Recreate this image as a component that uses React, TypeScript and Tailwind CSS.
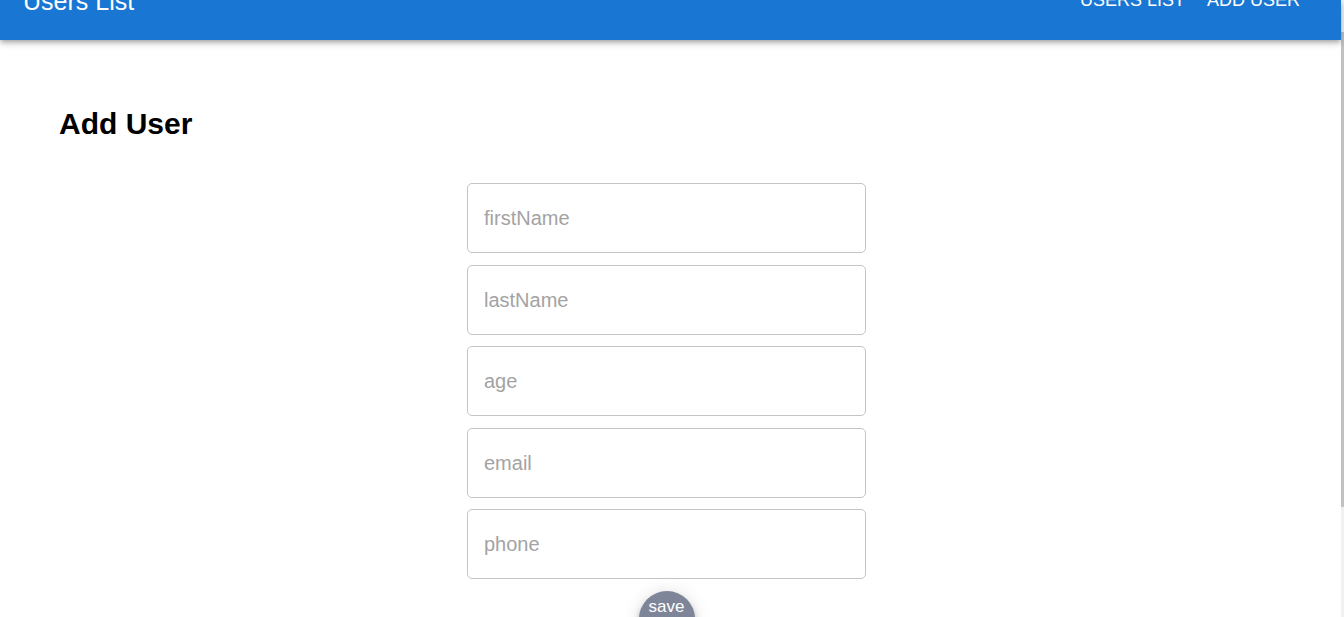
import React from "react";

const fields = ["firstName", "lastName", "age", "email", "phone"];

export default function App() {
  return (
    <div
      className="flex h-[617px] w-[1344px] overflow-hidden bg-white"
      style={{ fontFamily: '"Liberation Sans", Arial, sans-serif' }}
    >
      <div className="flex flex-1 flex-col">
        <header className="relative z-10 flex h-[40px] shrink-0 items-start justify-between overflow-hidden bg-[#1976d2] text-white shadow-[0px_2px_4px_-1px_rgba(0,0,0,0.2),0px_4px_5px_0px_rgba(0,0,0,0.14),0px_1px_10px_0px_rgba(0,0,0,0.12)]">
          <div className="ml-[23px] mt-[-11px] text-[25px] leading-[25px]">Users List</div>
          <nav className="mr-[41px] mt-[-9px] flex gap-[22px] text-[18px] leading-[18px]">
            <span>USERS LIST</span>
            <span>ADD USER</span>
          </nav>
        </header>
        <main className="flex flex-col">
          <h1 className="ml-[59px] mt-[69px] text-[30px] font-bold leading-[30px] text-black">Add User</h1>
          <div className="ml-[467px] mt-[44px] flex w-[399px] flex-col items-center gap-[11.5px]">
            {fields.map((f) => (
              <div
                key={f}
                className="flex h-[70px] w-full items-center rounded-[5px] border border-[#c4c4c4] px-[16px] text-[20px] text-[#a3a3a3]"
              >
                {f}
              </div>
            ))}
            <div className="flex h-[56px] w-[56px] shrink-0 justify-center rounded-full bg-[#7e8598] pt-[6px] text-[17px] leading-[20px] text-white shadow-[0px_3px_5px_-1px_rgba(0,0,0,0.2),0px_6px_10px_0px_rgba(0,0,0,0.14),0px_1px_18px_0px_rgba(0,0,0,0.12)]">
              save
            </div>
          </div>
        </main>
      </div>
      <div className="flex w-[3px] shrink-0 flex-col bg-[#f1f1f1]">
        <div className="mt-[32px] h-[475px] w-full bg-[#c1c1c1]" />
      </div>
    </div>
  );
}
